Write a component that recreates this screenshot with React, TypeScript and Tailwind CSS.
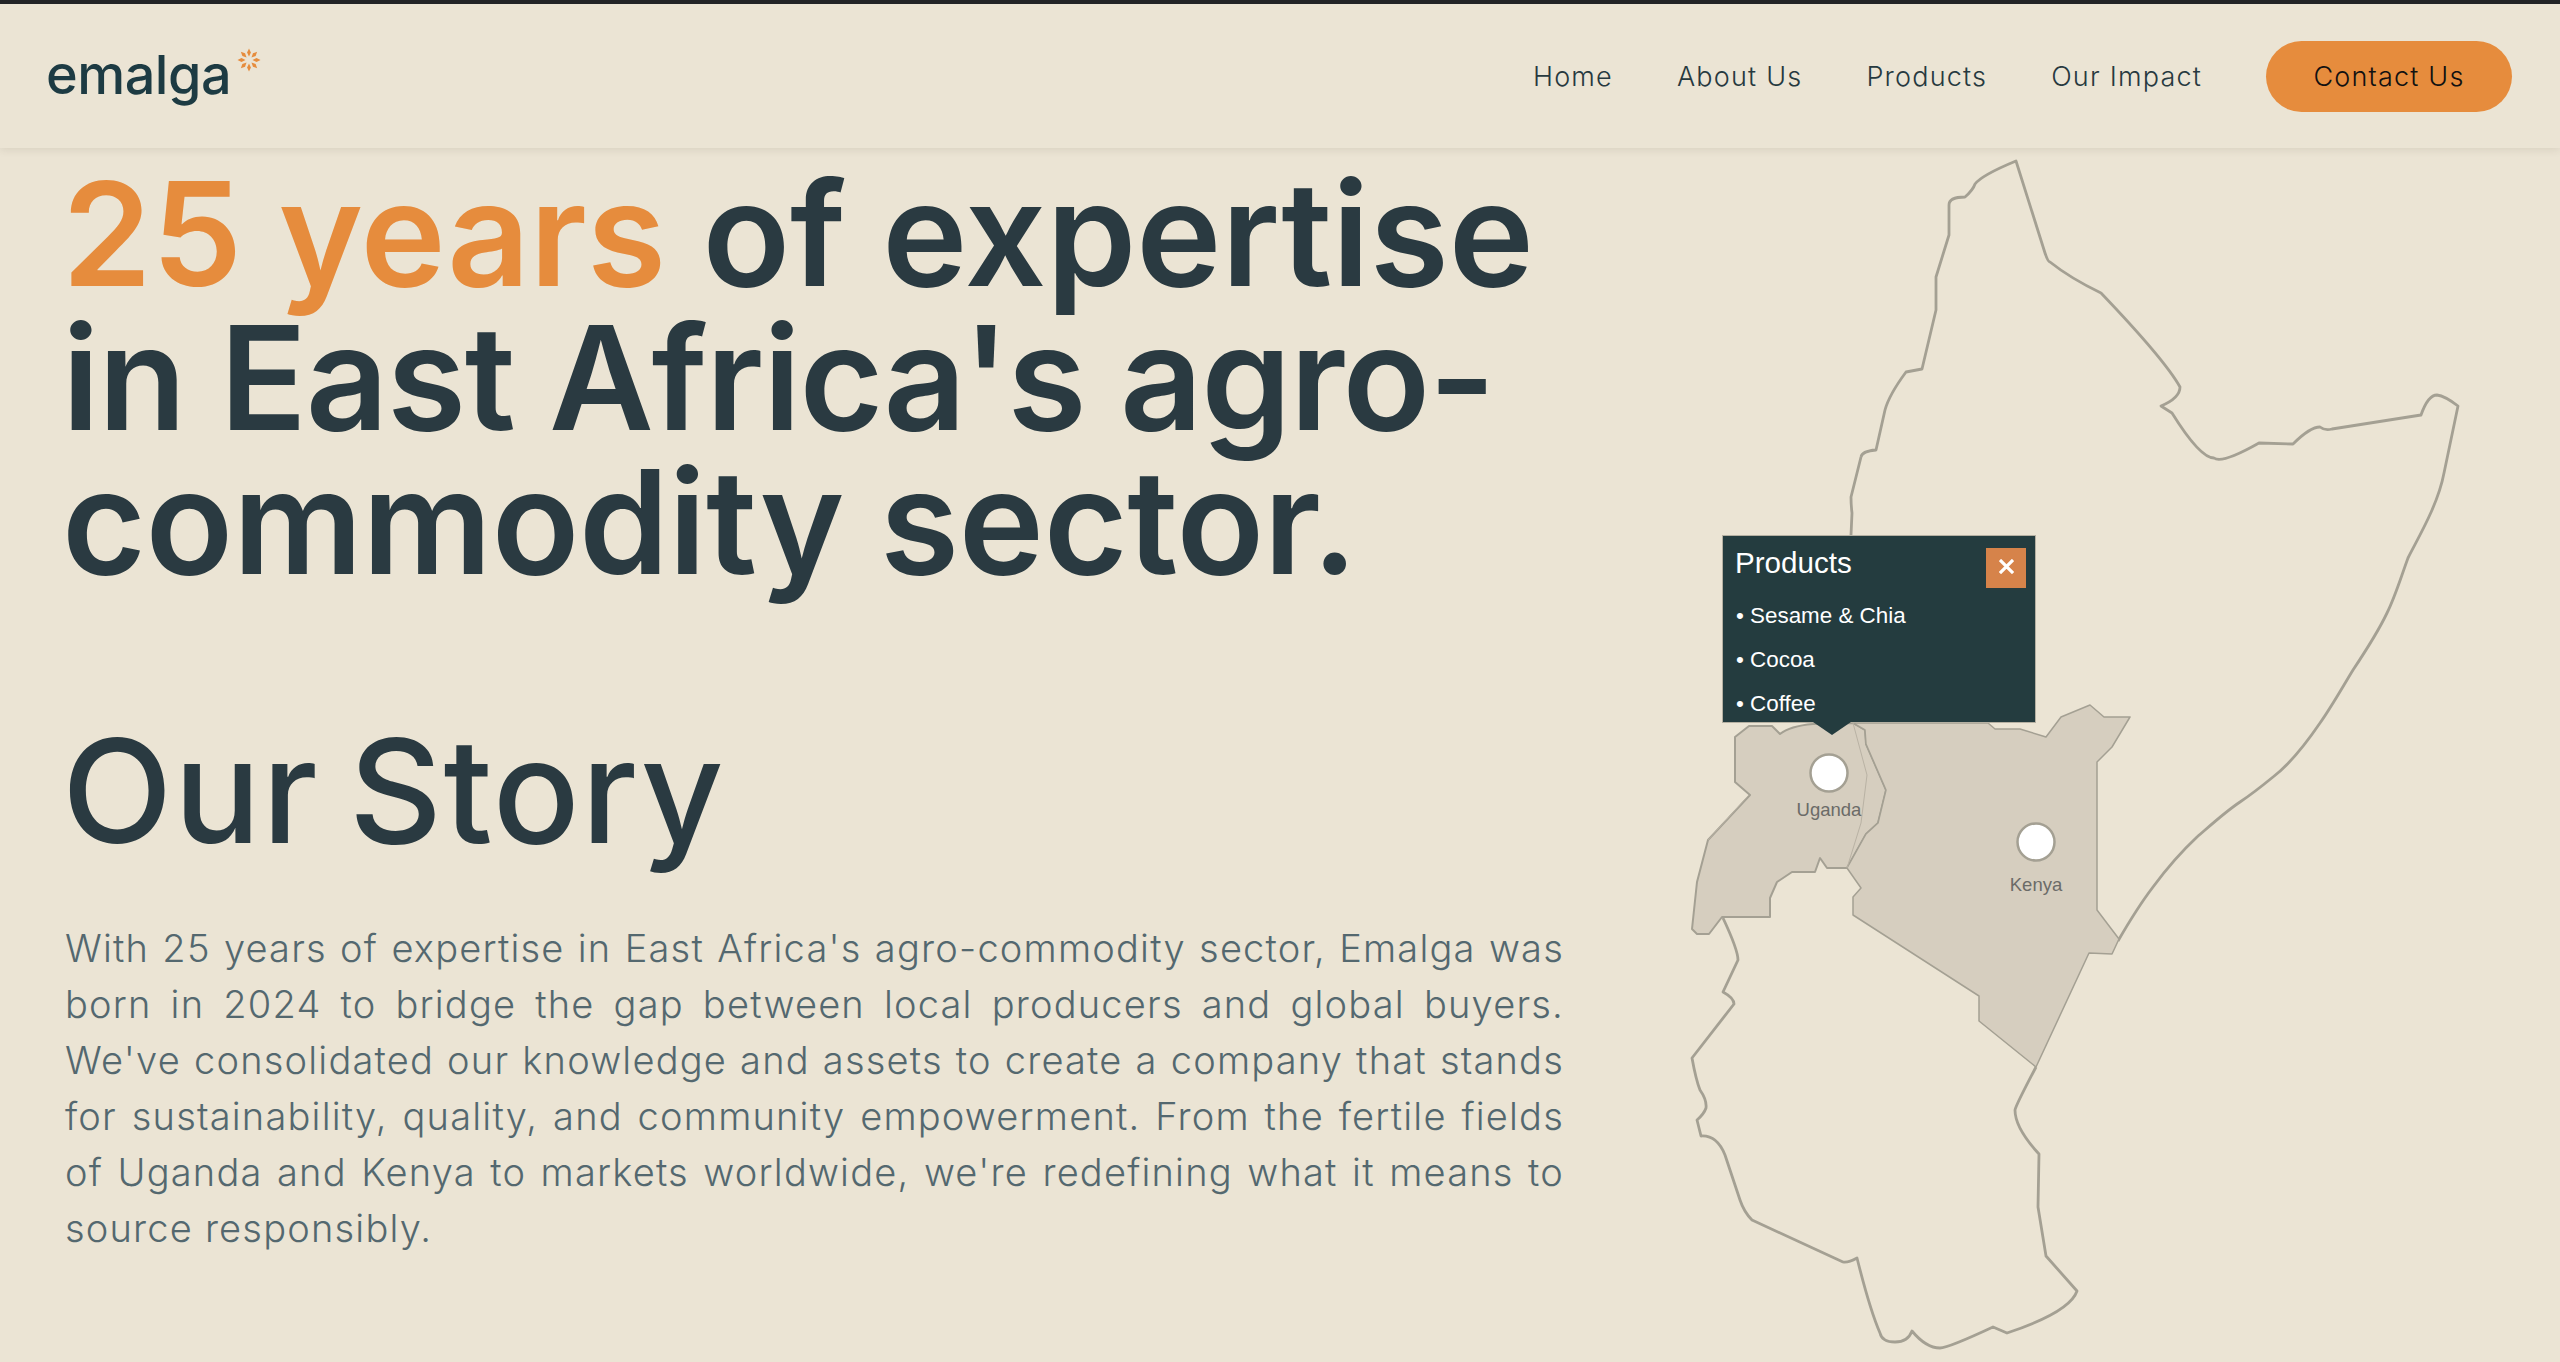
const nav = ["Home", "About Us", "Products", "Our Impact"];
const products = ["Sesame & Chia", "Cocoa", "Coffee"];

function Sunburst() {
  return (
    <svg viewBox="-12 -12 24 24" className="w-6 h-6 mt-[-32px] ml-[6px]" fill="#e68c3d">
      {[0, 45, 90, 135, 180, 225, 270, 315].map((a) => (
        <path key={a} d="M0 -11.5 L1.9 -7.5 L0 -3.5 L-1.9 -7.5 Z" transform={`rotate(${a})`} />
      ))}
    </svg>
  );
}

function EastAfricaMap() {
  return (
    <svg viewBox="1680 150 880 1212" className="w-[880px] h-[1212px]" fill="none" strokeLinejoin="round">
      {/* Ethiopia / Somalia outline */}
      <path
        stroke="#a4a093"
        strokeWidth="2.8"
        d="M1851 535 L1852 513 Q1851 505 1851 497 L1861 457 Q1862 451 1876 450 L1885 410 Q1889 395 1906 372 L1922 369 L1936 310 L1936 277 L1949 235 L1949 205 Q1949 197 1965 197 Q1973 190 1975 184 Q1982 175 2016 161 L2045 253 Q2048 262 2050 262 Q2070 278 2101 293 Q2165 360 2180 387 Q2180 398 2161 406 L2172 413 Q2200 458 2214 458 Q2222 464 2259 443 L2293 444 Q2310 427 2320 427 Q2325 431 2332 429 L2421 415 Q2428 395 2437 395 Q2445 396 2458 406 L2444 473 C2438 505 2418 538 2408 558 C2400 580 2395 597 2387 613 C2378 632 2365 652 2353 670 C2342 688 2332 706 2320 723 C2305 745 2290 764 2273 777 C2262 786 2252 794 2240 802 C2225 812 2211 825 2197 837 C2181 852 2167 868 2153 887 C2140 904 2129 922 2118 941"
      />
      {/* Tanzania */}
      <path
        stroke="#a4a093"
        strokeWidth="2.8"
        d="M1723 918 Q1738 950 1738 960 L1723 992 Q1734 998 1734 1004 L1692 1058 Q1696 1080 1700 1090 Q1707 1100 1706 1108 Q1704 1114 1697 1120 L1701 1136 Q1717 1135 1725 1155 L1740 1200 Q1744 1212 1752 1220 L1843 1262 Q1848 1263 1857 1258 Q1870 1310 1880 1333 Q1882 1342 1895 1342 Q1908 1342 1912 1331 Q1926 1348 1940 1348 Q1948 1348 1993 1327 L2007 1333 Q2070 1312 2077 1291 L2046 1256 L2038 1207 L2039 1154 Q2015 1128 2015 1110 Q2016 1105 2036 1067"
      />
      {/* Uganda */}
      <path
        fill="#d6cebf"
        stroke="#a4a093"
        strokeWidth="2"
        d="M1735 737 L1749 726 L1772 726 L1780 734 Q1790 726 1813 724 L1853 723 L1865 730 L1866 744 L1886 790 L1878 823 L1866 834 L1847 868 L1827 868 L1820 858 L1815 872 L1792 872 L1777 882 L1770 898 L1770 917 L1722 917 L1709 934 L1697 934 L1692 929 L1697 882 L1708 840 L1750 795 L1735 782 Z"
      />
      {/* Kenya */}
      <path
        fill="#d6cebf"
        stroke="#a4a093"
        strokeWidth="1.5"
        d="M1847 868 L1861 888 L1853 897 L1853 915 L1979 996 L1979 1021 L2036 1067 L2089 953 L2112 954 L2119 939 L2097 910 L2097 762 L2112 747 L2130 717 L2104 717 L2090 705 L2061 717 L2046 737 L2020 729 L1995 729 L1988 723 L1853 723 L1865 730 L1866 744 L1886 790 L1878 823 L1866 834 Z"
      />
      <path stroke="#b9b2a4" strokeWidth="1" d="M1853 723 L1867 775 L1861 823 L1847 868 M1708 840 L1747 797" />
      <circle cx="1829" cy="773" r="18.5" fill="#ffffff" stroke="#a4a093" strokeWidth="2.5" />
      <circle cx="2036" cy="842" r="18.5" fill="#ffffff" stroke="#a4a093" strokeWidth="2.5" />
      <text x="1829" y="816" textAnchor="middle" fontSize="18.5" fill="#6b6b68" fontFamily="Liberation Sans, sans-serif">
        Uganda
      </text>
      <text x="2036" y="891" textAnchor="middle" fontSize="18.5" fill="#6b6b68" fontFamily="Liberation Sans, sans-serif">
        Kenya
      </text>
    </svg>
  );
}

export default function App() {
  return (
    <div className="min-h-screen h-[1362px] overflow-hidden bg-[#ebe4d4] border-t-4 border-[#222426] font-['Inter',sans-serif]">
      <header className="relative z-10 h-[144px] flex items-center justify-between pl-[46px] pr-[48px] bg-[#ebe4d4] shadow-[0_2px_8px_rgba(60,50,30,0.1)]">
        <div className="flex items-center">
          <span className="text-[54px] font-medium text-[#1d3b43] tracking-[-0.5px] pb-[3px]">emalga</span>
          <Sunburst />
        </div>
        <nav className="flex items-center gap-[64px] text-[27px] font-light tracking-[1.2px] text-[#27393f]">
          {nav.map((n) => (
            <a key={n} className="pt-[2px]">
              {n}
            </a>
          ))}
          <button className="w-[246px] h-[71px] pt-[2px] rounded-[36px] bg-[#e68c3d] text-[#111] font-light">
            Contact Us
          </button>
        </nav>
      </header>
      <main className="flex justify-between pl-[65px]">
        <div className="w-[1499px] pt-[14px]">
          <h1 className="ml-[-3px] text-[144px] leading-[144px] font-semibold whitespace-nowrap text-[#2a3a41]">
            <span className="block">
              <span className="text-[#e68c3d]">25 years</span> of expertise
            </span>
            <span className="block tracking-[-1.4px]">in East Africa's agro-</span>
            <span className="block tracking-[-0.3px]">commodity sector.</span>
          </h1>
          <h2 className="ml-[-3px] mt-[125px] text-[144px] leading-[144px] font-[450] tracking-[1.5px] [word-spacing:-10px] text-[#2a3a41]">
            Our Story
          </h2>
          <p className="mt-[57px] text-[38px] leading-[56px] font-light tracking-[1.2px] text-justify text-[#54686f]">
            With 25 years of expertise in East Africa's agro-commodity sector, Emalga was born in 2024 to bridge the gap
            between local producers and global buyers. We've consolidated our knowledge and assets to create a company
            that stands for sustainability, quality, and community empowerment. From the fertile fields of Uganda and
            Kenya to markets worldwide, we're redefining what it means to source responsibly.
          </p>
        </div>
        <div className="relative w-[880px] h-[1212px] shrink-0 mt-[2px]">
          <EastAfricaMap />
          <div className="absolute left-[42px] top-[385px] w-[314px] h-[188px] bg-[#243c3f] border border-[#b5b0a2] pl-[12px] pt-[5px] font-['Liberation_Sans',sans-serif] text-white">
            <div className="text-[29.6px] leading-[44px]">Products</div>
            <ul className="mt-[9px] pl-[1px] text-[22.4px] leading-[44px]">
              {products.map((p) => (
                <li key={p}>• {p}</li>
              ))}
            </ul>
            <button className="absolute right-[9px] top-[12px] w-[40px] h-[40px] pb-[3px] bg-[#d6834a] flex items-center justify-center">
              <svg viewBox="0 0 16 16" className="w-[15px] h-[15px]" stroke="#fff" strokeWidth="3.4">
                <path d="M1 1 L15 15 M15 1 L1 15" />
              </svg>
            </button>
            <div className="absolute left-[90px] top-full w-0 h-0 border-x-[19px] border-x-transparent border-t-[13px] border-t-[#243c3f]" />
          </div>
        </div>
      </main>
    </div>
  );
}
